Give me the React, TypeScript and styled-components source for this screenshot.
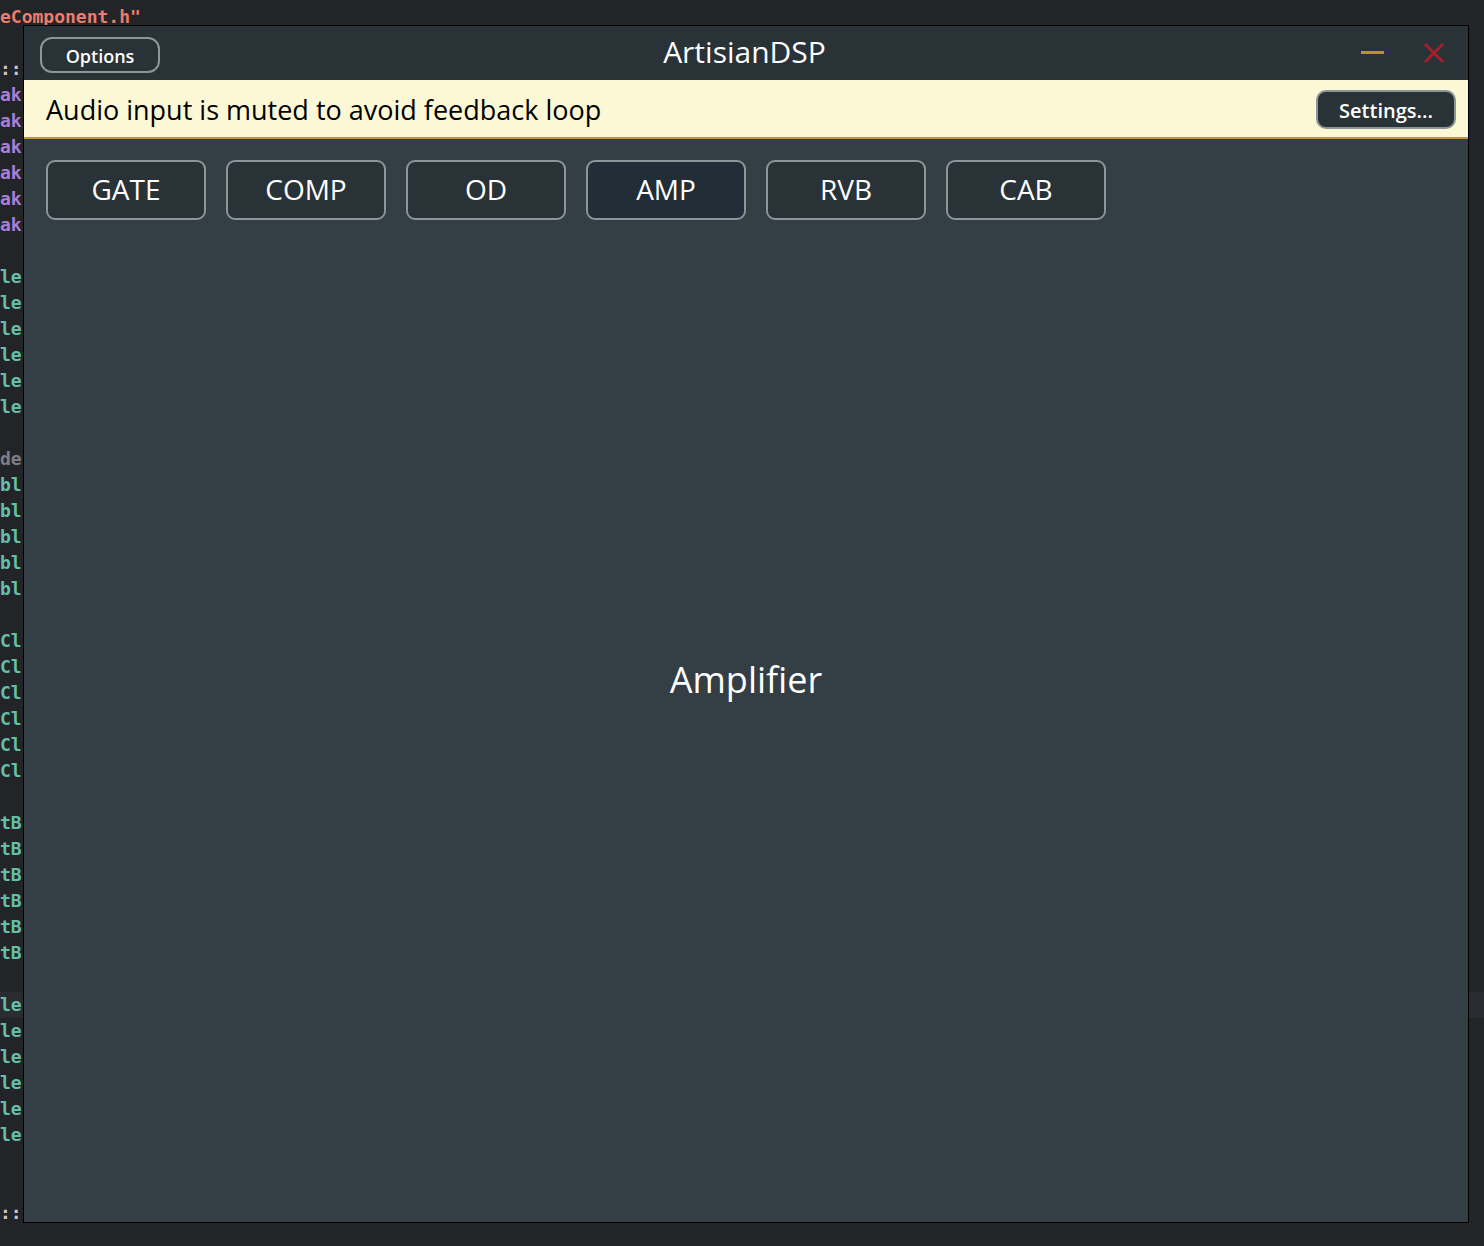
import React from 'react'
import styled, { createGlobalStyle } from 'styled-components'

const GlobalStyle = createGlobalStyle`
  html, body {
    margin: 0;
    padding: 0;
    background: #232428;
    overflow: hidden;
  }
  body {
    width: 1484px;
    height: 1246px;
  }
`

const Desktop = styled.div`
  position: relative;
  width: 1484px;
  height: 1246px;
  background: #232428;
  overflow: hidden;
`

const Editor = styled.div`
  padding-top: 4px;
  font-family: 'DejaVu Sans Mono', 'Liberation Mono', monospace;
  font-size: 18px;
  font-weight: bold;
  line-height: 26px;
  white-space: pre;
`

const CodeLine = styled.div<{ $current?: boolean }>`
  height: 26px;
  background: ${(p) => (p.$current ? '#2b2c31' : 'transparent')};
`

const Tok = styled.span<{ $c: string }>`
  color: ${(p) => p.$c};
`

const Window = styled.div`
  position: absolute;
  left: 23px;
  top: 25px;
  width: 1444px;
  height: 1196px;
  border: 1px solid #000;
  display: flex;
  flex-direction: column;
  background: #343e45;
  font-family: 'Open Sans', 'Noto Sans', sans-serif;
  color: #fff;
`

const TitleBar = styled.div`
  height: 54px;
  flex-shrink: 0;
  background: #283237;
  display: grid;
  grid-template-columns: 1fr auto 1fr;
  align-items: center;
  padding: 0 23px 0 16px;
`

const Title = styled.div`
  font-size: 30px;
  line-height: 1;
  padding: 0 0 2px 4px;
`

const PillButton = styled.button<{ $size: number; $h: number; $w: number; $radius: number; $shift?: number }>`
  box-sizing: border-box;
  width: ${(p) => p.$w}px;
  height: ${(p) => p.$h}px;
  margin-top: ${(p) => p.$shift ?? 0}px;
  border: 2px solid #8c9699;
  border-radius: ${(p) => p.$radius}px;
  background: #283237;
  color: #fff;
  font-family: 'Open Sans', 'Noto Sans', sans-serif;
  font-size: ${(p) => p.$size}px;
  font-weight: 600;
  padding: 2px 0 0;
  display: flex;
  align-items: center;
  justify-content: center;
`

const WindowControls = styled.div`
  justify-self: end;
  display: flex;
  align-items: center;
  gap: 38px;
`

const Banner = styled.div`
  height: 57px;
  flex-shrink: 0;
  background: #fcf8d6;
  border-bottom: 2px solid #c39433;
  display: flex;
  align-items: center;
  justify-content: space-between;
  padding: 0 12px 0 22px;
`

const BannerText = styled.div`
  color: #000;
  font-size: 27px;
  padding-top: 2px;
`

const Main = styled.div`
  flex: 1;
  display: grid;
  grid-template: 1fr / 1fr;
`

const TabRow = styled.div`
  grid-area: 1 / 1;
  align-self: start;
  display: flex;
  gap: 20px;
  padding: 21px 0 0 22px;
`

const Tab = styled.button<{ $active?: boolean }>`
  box-sizing: border-box;
  width: 160px;
  height: 60px;
  border: 2px solid #8c9699;
  border-radius: 9px;
  background: ${(p) => (p.$active ? '#212d37' : '#283237')};
  color: #fff;
  font-family: 'Open Sans', 'Noto Sans', sans-serif;
  font-size: 28px;
  font-weight: 500;
  padding: 0 0 2px;
`

const PageLabel = styled.div`
  grid-area: 1 / 1;
  align-self: center;
  justify-self: center;
  font-size: 36px;
  font-weight: 500;
  padding-bottom: 2px;
`

const RED = '#ee7c6a'
const PURPLE = '#a87fd8'
const TEAL = '#63bfa8'
const GRAY = '#7d7f86'
const LIGHT = '#c9c9c9'

type Line = { parts: [string, string][]; current?: boolean }

const repeat = (n: number, text: string, color: string): Line[] =>
  Array.from({ length: n }, () => ({ parts: [[text, color]] }))

// only the part of the editor left of the plugin window is visible
const lines: Line[] = [
  { parts: [['eComponent.h"', RED]] },
  { parts: [] },
  { parts: [['::', LIGHT]] },
  ...repeat(6, 'ak', PURPLE),
  { parts: [] },
  ...repeat(6, 'le', TEAL),
  { parts: [] },
  { parts: [['de', GRAY]] },
  ...repeat(5, 'bl', TEAL),
  { parts: [] },
  ...repeat(6, 'Cl', TEAL),
  { parts: [] },
  ...repeat(6, 'tB', TEAL),
  { parts: [] },
  ...repeat(6, 'le', TEAL).map((l, i) => (i === 0 ? { ...l, current: true } : l)),
  { parts: [] },
  { parts: [] },
  { parts: [['::', LIGHT]] },
]

const Minimize = () => (
  <svg width="24" height="4" viewBox="0 0 24 4">
    <rect x="0" y="0" width="23" height="3" fill="#b8952a" />
  </svg>
)

const Close = () => (
  <svg width="22" height="22" viewBox="0 0 22 22">
    <path d="M2 2 L20 20 M20 2 L2 20" stroke="#a51f2b" strokeWidth="3" />
  </svg>
)

const tabs = ['GATE', 'COMP', 'OD', 'AMP', 'RVB', 'CAB']

export default function App() {
  return (
    <Desktop>
      <GlobalStyle />
      <Editor>
        {lines.map((l, i) => (
          <CodeLine key={i} $current={l.current}>
            {l.parts.map(([t, c], j) => (
              <Tok key={j} $c={c}>
                {t}
              </Tok>
            ))}
          </CodeLine>
        ))}
      </Editor>
      <Window>
        <TitleBar>
          <PillButton $w={120} $h={36} $size={18} $radius={12} $shift={3}>
            Options
          </PillButton>
          <Title>ArtisianDSP</Title>
          <WindowControls>
            <Minimize />
            <Close />
          </WindowControls>
        </TitleBar>
        <Banner>
          <BannerText>Audio input is muted to avoid feedback loop</BannerText>
          <PillButton $w={140} $h={39} $size={20} $radius={10} $shift={1}>
            Settings...
          </PillButton>
        </Banner>
        <Main>
          <TabRow>
            {tabs.map((t) => (
              <Tab key={t} $active={t === 'AMP'}>
                {t}
              </Tab>
            ))}
          </TabRow>
          <PageLabel>Amplifier</PageLabel>
        </Main>
      </Window>
    </Desktop>
  )
}
